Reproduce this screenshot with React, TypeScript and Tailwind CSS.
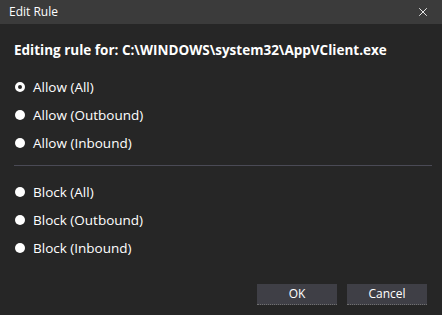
import { X } from "lucide-react";

const groups = [
  ["Allow (All)", "Allow (Outbound)", "Allow (Inbound)"],
  ["Block (All)", "Block (Outbound)", "Block (Inbound)"],
];

const Radio = ({ label, checked }: { label: string; checked?: boolean }) => (
  <div className="flex items-center h-[28px] gap-[8px] pl-[15px]">
    {checked ? (
      <span className="w-[10px] h-[10px] rounded-full border-[3px] border-white bg-[#262626]" />
    ) : (
      <span className="w-[10px] h-[10px] rounded-full bg-white" />
    )}
    <span className="text-[13.5px] text-white">{label}</span>
  </div>
);

export default function App() {
  return (
    <div
      className="w-[442px] h-[315px] bg-[#262626] flex flex-col"
      style={{ fontFamily: '"Open Sans", "Noto Sans", sans-serif' }}
    >
      <div className="h-[24px] bg-[#3b3b3b] flex items-center justify-between pl-[9px] pr-[12px] shrink-0">
        <span className="text-[12px] text-white">Edit Rule</span>
        <X size={14} strokeWidth={1.5} className="text-white" />
      </div>

      <div className="flex flex-col px-[14px] pt-[16px]">
        <p className="text-[13.5px] font-bold text-white leading-[20px]">
          Editing rule for: C:\WINDOWS\system32\AppVClient.exe
        </p>

        <div className="flex flex-col mt-[13px] -ml-[14px]">
          {groups[0].map((l, i) => (
            <Radio key={l} label={l} checked={i === 0} />
          ))}
        </div>

        <div className="h-px bg-[#4a4a55] mt-[8px] mr-[-4px]" />

        <div className="flex flex-col mt-[12px] -ml-[14px]">
          {groups[1].map((l) => (
            <Radio key={l} label={l} />
          ))}
        </div>
      </div>

      <div className="flex justify-end gap-[10px] mt-auto mb-[10px] pr-[15px]">
        <button className="w-[80px] h-[21px] bg-[#3f3f46] border-b border-dotted border-[#707070] text-[12px] text-white">
          OK
        </button>
        <button className="w-[80px] h-[21px] bg-[#3f3f46] border-b border-dotted border-[#707070] text-[12px] text-white">
          Cancel
        </button>
      </div>
    </div>
  );
}
